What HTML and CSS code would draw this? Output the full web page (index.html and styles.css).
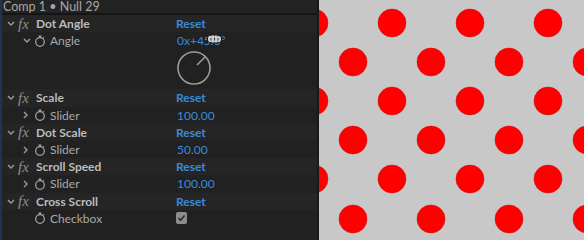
FILE: index.html
```html
<html>
<head>
<link rel="stylesheet" href="styles.css">
</head>
<body>

<div class="screen">
    <div class="panel">
        <div class="panel-title">Comp 1 &bull; Null 29</div>

        <div class="row effect">
            <div class="name">
                <span class="chev"><svg width="8" height="5" viewBox="0 0 8 5"><path d="M1 1 L4 4 L7 1" /></svg></span>
                <span class="fx">fx</span>
                <span class="label">Dot Angle</span>
            </div>
            <div class="value reset">Reset</div>
        </div>
        <div class="row prop">
            <div class="name">
                <span class="chev"><svg width="8" height="5" viewBox="0 0 8 5"><path d="M1 1 L4 4 L7 1" /></svg></span>
                <span class="watch"><svg width="12" height="12" viewBox="0 0 12 12"><circle cx="6" cy="7" r="4.3" /><path d="M4.6 1.2 H7.4 M6 1.2 V2.7 M9.2 3.2 L10 2.4" /></svg></span>
                <span class="label">Angle</span>
            </div>
            <div class="value number angle-value">0x+45.0&deg;
                <svg class="scrub-cursor" width="17" height="12" viewBox="0 0 17 12"><path d="M1.5 6 C1.5 2.8 3.6 1.6 5.2 2.7 C6.2 1.3 7.9 1.3 8.5 2.7 C9.3 1.3 11.1 1.4 11.6 3 C13.2 2 15.5 3 15.5 6 C15.5 9.2 13.2 10.3 11.6 9.2 C10.6 10.5 9 10.5 8.5 9.2 C7.7 10.6 5.8 10.5 5.2 9.2 C3.6 10.3 1.5 9.2 1.5 6 Z" /><path class="dots" d="M5 5 V7.5 M8.5 4.5 V7.5 M12 5 V7.5" /></svg>
            </div>
        </div>
        <div class="dial-row">
            <svg class="dial" width="36" height="36" viewBox="0 0 36 36"><circle cx="18" cy="18" r="16" /><path d="M21 15 L29 7" /></svg>
        </div>

        <div class="row effect">
            <div class="name">
                <span class="chev"><svg width="8" height="5" viewBox="0 0 8 5"><path d="M1 1 L4 4 L7 1" /></svg></span>
                <span class="fx">fx</span>
                <span class="label">Scale</span>
            </div>
            <div class="value reset">Reset</div>
        </div>
        <div class="row prop">
            <div class="name">
                <span class="chev"><svg width="5" height="8" viewBox="0 0 5 8"><path d="M1 1 L4 4 L1 7" /></svg></span>
                <span class="watch"><svg width="12" height="12" viewBox="0 0 12 12"><circle cx="6" cy="7" r="4.3" /><path d="M4.6 1.2 H7.4 M6 1.2 V2.7 M9.2 3.2 L10 2.4" /></svg></span>
                <span class="label">Slider</span>
            </div>
            <div class="value number">100.00</div>
        </div>

        <div class="row effect">
            <div class="name">
                <span class="chev"><svg width="8" height="5" viewBox="0 0 8 5"><path d="M1 1 L4 4 L7 1" /></svg></span>
                <span class="fx">fx</span>
                <span class="label">Dot Scale</span>
            </div>
            <div class="value reset">Reset</div>
        </div>
        <div class="row prop">
            <div class="name">
                <span class="chev"><svg width="5" height="8" viewBox="0 0 5 8"><path d="M1 1 L4 4 L1 7" /></svg></span>
                <span class="watch"><svg width="12" height="12" viewBox="0 0 12 12"><circle cx="6" cy="7" r="4.3" /><path d="M4.6 1.2 H7.4 M6 1.2 V2.7 M9.2 3.2 L10 2.4" /></svg></span>
                <span class="label">Slider</span>
            </div>
            <div class="value number">50.00</div>
        </div>

        <div class="row effect">
            <div class="name">
                <span class="chev"><svg width="8" height="5" viewBox="0 0 8 5"><path d="M1 1 L4 4 L7 1" /></svg></span>
                <span class="fx">fx</span>
                <span class="label">Scroll Speed</span>
            </div>
            <div class="value reset">Reset</div>
        </div>
        <div class="row prop">
            <div class="name">
                <span class="chev"><svg width="5" height="8" viewBox="0 0 5 8"><path d="M1 1 L4 4 L1 7" /></svg></span>
                <span class="watch"><svg width="12" height="12" viewBox="0 0 12 12"><circle cx="6" cy="7" r="4.3" /><path d="M4.6 1.2 H7.4 M6 1.2 V2.7 M9.2 3.2 L10 2.4" /></svg></span>
                <span class="label">Slider</span>
            </div>
            <div class="value number">100.00</div>
        </div>

        <div class="row effect">
            <div class="name">
                <span class="chev"><svg width="8" height="5" viewBox="0 0 8 5"><path d="M1 1 L4 4 L7 1" /></svg></span>
                <span class="fx">fx</span>
                <span class="label">Cross Scroll</span>
            </div>
            <div class="value reset">Reset</div>
        </div>
        <div class="row prop">
            <div class="name">
                <span class="chev"></span>
                <span class="watch"><svg width="12" height="12" viewBox="0 0 12 12"><circle cx="6" cy="7" r="4.3" /><path d="M4.6 1.2 H7.4 M6 1.2 V2.7 M9.2 3.2 L10 2.4" /></svg></span>
                <span class="label">Checkbox</span>
            </div>
            <div class="value">
                <span class="checkbox"><svg width="11" height="12" viewBox="0 0 11 12"><path d="M2.5 6 L4.6 8.2 L8.6 3.6" /></svg></span>
            </div>
        </div>
    </div>

    <div class="canvas">
        <svg width="265" height="240" viewBox="0 0 265 240">
            <g class="dots">
                <circle cx="-5" cy="23" r="14" /><circle cx="73" cy="23" r="14" /><circle cx="151" cy="23" r="14" /><circle cx="229" cy="23" r="14" />
                <circle cx="34" cy="62" r="14" /><circle cx="112" cy="62" r="14" /><circle cx="190" cy="62" r="14" /><circle cx="268" cy="62" r="14" />
                <circle cx="-5" cy="101" r="14" /><circle cx="73" cy="101" r="14" /><circle cx="151" cy="101" r="14" /><circle cx="229" cy="101" r="14" />
                <circle cx="34" cy="140" r="14" /><circle cx="112" cy="140" r="14" /><circle cx="190" cy="140" r="14" /><circle cx="268" cy="140" r="14" />
                <circle cx="-5" cy="179" r="14" /><circle cx="73" cy="179" r="14" /><circle cx="151" cy="179" r="14" /><circle cx="229" cy="179" r="14" />
                <circle cx="34" cy="219" r="14" /><circle cx="112" cy="219" r="14" /><circle cx="190" cy="219" r="14" /><circle cx="268" cy="219" r="14" />
            </g>
        </svg>
    </div>
</div>

</body>
</html>
```

FILE: styles.css
```css
* {
    box-sizing: border-box;
}

body {
    margin: 0;
    background-color: #232323;
    font-family: "Lato", "Open Sans", sans-serif;
    font-size: 12px;
}

.screen {
    display: flex;
    width: 584px;
    height: 240px;
    overflow: hidden;
}

.panel {
    width: 317px;
    height: 240px;
    border-left: 2px solid #1f3450;
    background-color: #212121;
}

.panel-title {
    height: 15px;
    line-height: 13px;
    padding-left: 1px;
    font-size: 12.5px;
    color: #a6a6a6;
    background-color: #232323;
    border-bottom: 2px solid #151515;
}

.row {
    display: flex;
    align-items: center;
    height: 17.2px;
}

.row.effect {
    background-color: #252525;
}

.name {
    display: flex;
    align-items: center;
    width: 174px;
}

.effect .name {
    padding-left: 5px;
}

.prop .name {
    padding-left: 21px;
}

.chev {
    display: flex;
    align-items: center;
    width: 11px;
}

.chev svg path {
    fill: none;
    stroke: #9c9c9c;
    stroke-width: 1.4;
}

.fx {
    width: 18px;
    font-family: "Liberation Serif", serif;
    font-style: italic;
    font-size: 15px;
    line-height: 14px;
    color: #8e8e8e;
}

.watch {
    display: flex;
    align-items: center;
    width: 16px;
}

.watch svg {
    fill: none;
    stroke: #a8a8a8;
    stroke-width: 1.2;
}

.label {
    color: #a9a9a9;
}

.effect .label {
    font-weight: bold;
    color: #bcbcbc;
}

.value {
    display: flex;
    align-items: center;
    color: #3a8bd8;
}

.reset {
    font-weight: bold;
}

.number {
    padding-left: 1px;
}

.angle-value {
    position: relative;
}

.scrub-cursor {
    position: absolute;
    left: 30px;
    top: 0;
}

.scrub-cursor path {
    fill: #cfcfcf;
    stroke: #111111;
    stroke-width: 1;
}

.scrub-cursor path.dots {
    fill: none;
    stroke: #333333;
}

.dial-row {
    height: 39px;
    padding-left: 174px;
}

.dial {
    display: block;
    margin-top: 1px;
}

.dial circle,
.dial path {
    fill: none;
    stroke: #9a9a9a;
    stroke-width: 1.6;
}

.checkbox {
    display: flex;
    width: 11px;
    height: 12px;
    border-radius: 2px;
    background-color: #8d8d8d;
}

.checkbox svg path {
    fill: none;
    stroke: #2b2b2b;
    stroke-width: 1.6;
}

.canvas {
    width: 267px;
    height: 240px;
    border-left: 2px solid #1a1a1a;
    background-color: #c8c8c8;
}

.canvas svg {
    display: block;
}

.dots circle {
    fill: #ff0000;
    stroke: #c81010;
    stroke-width: 0.5;
}
```
